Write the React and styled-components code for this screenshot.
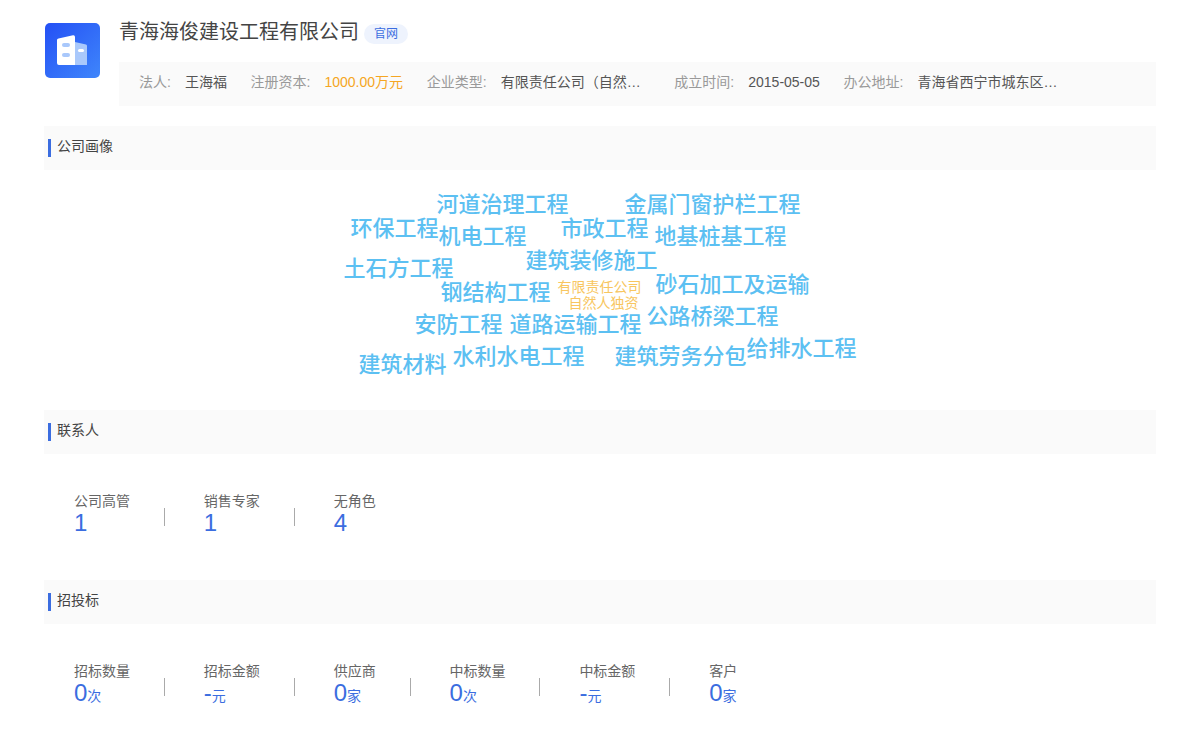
import React from 'react';
import styled, { createGlobalStyle } from 'styled-components';

const GlobalStyle = createGlobalStyle`
  html, body {
    margin: 0;
    padding: 0;
    background: #fff;
    font-family: "Liberation Sans", "Noto Sans CJK SC", sans-serif;
  }
`;

const Page = styled.div`
  width: 1200px;
  height: 752px;
  overflow: hidden;
  padding: 0 44px;
  box-sizing: border-box;
`;

const Header = styled.div`
  display: flex;
  height: 126px;
  padding-top: 15px;
  box-sizing: border-box;
`;

const Logo = styled.div`
  width: 55px;
  height: 55px;
  margin: 8px 19px 0 1px;
  flex-shrink: 0;
  border-radius: 5px;
  overflow: hidden;
  background: linear-gradient(135deg, #2450f5, #3f86fb);
`;

const HeaderBody = styled.div`
  flex: 1;
  min-width: 0;
`;

const TitleRow = styled.div`
  display: flex;
  align-items: center;
  height: 32px;
  margin-top: 1px;
`;

const Title = styled.h1`
  margin: 0;
  font-size: 20px;
  font-weight: 400;
  line-height: 32px;
  color: #444;
`;

const Badge = styled.span`
  margin: 4px 0 0 5px;
  width: 44px;
  height: 20px;
  border-radius: 10px;
  background: #eef3fd;
  color: #3b6de0;
  font-size: 12px;
  line-height: 20px;
  text-align: center;
`;

const InfoBar = styled.div`
  display: flex;
  align-items: center;
  height: 44px;
  margin-top: 14px;
  padding: 0 0 4px 20px;
  box-sizing: border-box;
  background: #fafafa;
  font-size: 14px;
  line-height: 20px;
`;

const InfoItem = styled.div`
  display: flex;
  align-items: baseline;
  margin-right: 23.7px;
  white-space: nowrap;
`;

const InfoLabel = styled.span`
  color: #999;
  margin-right: 14px;
`;

const InfoValue = styled.span`
  color: ${props => props.$accent ? '#f5a623' : '#555'};
  ${props => props.$width ? `width: ${props.$width}px;` : ''}
`;

const SectionBar = styled.div`
  height: 44px;
  display: flex;
  background: #fafafa;
  padding: 13px 0 0 4px;
  box-sizing: border-box;
  font-size: 14px;
  line-height: 14px;
  color: #444;
`;

const SectionMark = styled.span`
  width: 3px;
  height: 18px;
  margin-right: 6px;
  background: #3b6de0;
`;

const Cloud = styled.div`
  position: relative;
  height: 240px;
`;

const Word = styled.span`
  position: absolute;
  left: ${props => props.$x - 44.5}px;
  top: ${props => props.$y - (props.$small ? 170 : 169)}px;
  transform: translateY(-50%);
  font-size: ${props => props.$small ? 14 : 22}px;
  font-weight: ${props => props.$small ? 400 : 500};
  line-height: 1;
  white-space: nowrap;
  color: ${props => props.$small ? '#f8c660' : '#5cc0f2'};
`;

const StatsRow = styled.div`
  display: flex;
  height: 126px;
  padding: 38px 0 0 30px;
  box-sizing: border-box;
`;

const Stat = styled.div`
  position: relative;
  padding-right: 33.85px;
  margin-right: 40px;
`;

const StatDivider = styled.span`
  position: absolute;
  right: -1px;
  top: 16px;
  width: 1px;
  height: 18px;
  background: #aaa;
`;

const StatLabel = styled.div`
  font-size: 14px;
  line-height: 18px;
  color: #666;
`;

const StatValue = styled.div`
  font-size: 24px;
  line-height: 26px;
  color: #3b6de0;
  white-space: nowrap;
`;

const StatUnit = styled.span`
  font-size: 14px;
`;

const words = [
  ['河道治理工程', 437, 204], ['金属门窗护栏工程', 625, 204], ['环保工程', 351, 228],
  ['机电工程', 439, 236], ['市政工程', 561, 228], ['地基桩基工程', 655, 236],
  ['建筑装修施工', 526, 260], ['土石方工程', 344, 268], ['钢结构工程', 441, 292],
  ['砂石加工及运输', 656, 284], ['安防工程', 415, 324], ['道路运输工程', 510, 324],
  ['公路桥梁工程', 647, 316], ['建筑材料', 359, 364], ['水利水电工程', 453, 356],
  ['建筑劳务分包', 615, 356], ['给排水工程', 747, 348],
  ['有限责任公司', 558, 287, true], ['自然人独资', 569, 303, true],
];

const contacts = [
  { label: '公司高管', value: '1' },
  { label: '销售专家', value: '1' },
  { label: '无角色', value: '4', last: true },
];

const bids = [
  { label: '招标数量', value: '0', unit: '次' },
  { label: '招标金额', value: '-', unit: '元' },
  { label: '供应商', value: '0', unit: '家' },
  { label: '中标数量', value: '0', unit: '次' },
  { label: '中标金额', value: '-', unit: '元' },
  { label: '客户', value: '0', unit: '家', last: true },
];

const BuildingIcon = () => (
  <svg width="55" height="55" viewBox="0 0 55 55">
    <path d="M30 19 L41 21.5 Q42 21.8 42 23 V42 H30 Z" fill="#a9c8fb" />
    <path d="M13.5 15.5 L28 12.3 Q30 12 30 14 V42 H14 Q12 42 12 40 V17 Q12 15.8 13.5 15.5 Z" fill="#fff" />
    <rect x="17" y="20" width="8" height="4" rx="2" fill="#a9c8fb" />
    <rect x="17" y="30" width="8" height="4" rx="2" fill="#a9c8fb" />
    <rect x="33" y="26" width="6" height="3" rx="1.5" fill="#fff" />
  </svg>
);

const Stats = ({ items }) => (
  <StatsRow>
    {items.map((item, i) => (
      <Stat key={i}>
        <StatLabel>{item.label}</StatLabel>
        <StatValue>
          {item.value}
          {item.unit && <StatUnit>{item.unit}</StatUnit>}
        </StatValue>
        {!item.last && <StatDivider />}
      </Stat>
    ))}
  </StatsRow>
);

const Section = ({ title }) => (
  <SectionBar>
    <SectionMark />
    {title}
  </SectionBar>
);

export default function App() {
  return (
    <Page>
      <GlobalStyle />
      <Header>
        <Logo><BuildingIcon /></Logo>
        <HeaderBody>
          <TitleRow>
            <Title>青海海俊建设工程有限公司</Title>
            <Badge>官网</Badge>
          </TitleRow>
          <InfoBar>
            <InfoItem><InfoLabel>法人:</InfoLabel><InfoValue>王海福</InfoValue></InfoItem>
            <InfoItem><InfoLabel>注册资本:</InfoLabel><InfoValue $accent>1000.00万元</InfoValue></InfoItem>
            <InfoItem><InfoLabel>企业类型:</InfoLabel><InfoValue $width={150}>有限责任公司（自然…</InfoValue></InfoItem>
            <InfoItem><InfoLabel>成立时间:</InfoLabel><InfoValue>2015-05-05</InfoValue></InfoItem>
            <InfoItem><InfoLabel>办公地址:</InfoLabel><InfoValue>青海省西宁市城东区…</InfoValue></InfoItem>
          </InfoBar>
        </HeaderBody>
      </Header>
      <Section title="公司画像" />
      <Cloud>
        {words.map(([text, x, y, small]) => (
          <Word key={text} $x={x} $y={y} $small={small}>{text}</Word>
        ))}
      </Cloud>
      <Section title="联系人" />
      <Stats items={contacts} />
      <Section title="招投标" />
      <Stats items={bids} />
    </Page>
  );
}
